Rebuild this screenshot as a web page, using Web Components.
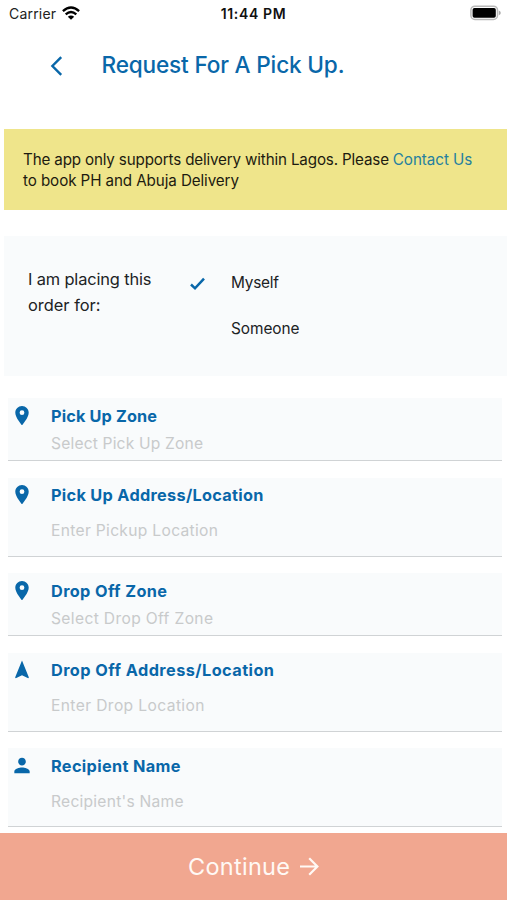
<!DOCTYPE html>
<html lang="en">
<head>
<meta charset="utf-8">
<title>Request For A Pick Up</title>
<style>
html,body{margin:0;padding:0}
body{width:507px;height:900px;overflow:hidden;background:#fff;font-family:Inter,"Liberation Sans",sans-serif}
</style>
</head>
<body>
<pickup-screen></pickup-screen>
<script>
// A single line of text whose tracking is set so that it fills a given width.
class FitText extends HTMLElement {
  connectedCallback() {
    if (this.shadowRoot) return;
    const root = this.attachShadow({mode: 'open'});
    root.innerHTML = `<style>:host{display:inline-block;white-space:nowrap;font-kerning:normal}span{display:inline-block}</style><span><slot></slot></span>`;
    const span = root.querySelector('span');
    const width = parseFloat(this.getAttribute('width'));
    const n = this.textContent.length;
    const natural = span.getBoundingClientRect().width;
    if (width && natural) span.style.letterSpacing = ((width - natural) / (n - 1)).toFixed(3) + 'px';
  }
}

const ICONS = {
  pin: '<path fill-rule="evenodd" d="M12 2C8.13 2 5 5.13 5 9c0 5.25 7 13 7 13s7-7.75 7-13c0-3.87-3.13-7-7-7zm0 9.5a2.5 2.5 0 1 1 0-5 2.5 2.5 0 0 1 0 5z"/>',
  nav: '<path d="M12 2.5 4.8 20.3l.7.7 6.5-3 6.5 3 .7-.7z"/>',
  person: '<path d="M12 12c2.21 0 4-1.79 4-4s-1.79-4-4-4-4 1.79-4 4 1.79 4 4 4zm0 2c-2.67 0-8 1.34-8 4v2h16v-2c0-2.66-5.33-4-8-4z"/>'
};

class StatusBar extends HTMLElement {
  constructor() {
    super();
    this.attachShadow({mode: 'open'}).innerHTML = `<style>
      :host{display:grid;grid-template-columns:1fr auto 1fr;height:28px;line-height:28px;font-size:14px;color:#222}
      .l{display:flex;align-items:center;gap:6px;padding-left:9px}
      .t{font-weight:600;color:#111}
      .r{display:flex;justify-content:flex-end;align-items:center;padding-right:6px}
      svg{display:block}
    </style>
    <div class="l"><fit-text width="47">Carrier</fit-text>
      <svg width="18" height="14" viewBox="0 0 18 14" style="margin-top:-2px"><g fill="none" stroke="#000" stroke-width="2.4"><path d="M.9 5.1Q9-2 17.1 5.1"/><path d="M3.7 8.3Q9 3.8 14.3 8.3"/></g><path d="M9 13.8 5.8 10.7Q9 8.1 12.2 10.7z"/></svg>
    </div>
    <div class="t"><fit-text width="65">11:44 PM</fit-text></div>
    <div class="r"><svg width="31" height="16" viewBox="0 0 31 16" style="margin-top:-2px"><rect x=".9" y="1.2" width="26.6" height="13.3" rx="4" fill="#fff" stroke="#b9b9b9" stroke-width="1.5"/><rect x="2.6" y="3" width="23.2" height="9.7" rx="1.8"/><path d="M28.8 5.5q2 .9 2 2.4t-2 2.4z" fill="#aaa"/></svg></div>`;
  }
}

class TitleBar extends HTMLElement {
  constructor() {
    super();
    this.attachShadow({mode: 'open'}).innerHTML = `<style>
      :host{display:flex;height:74px;box-sizing:border-box;padding:0 0 2px 50px;align-items:center;color:#0967a9;font-size:22.6px;font-weight:500}
      svg{margin:3px 38.5px 0 0}
    </style>
    <svg width="13" height="20" viewBox="0 0 13 20" fill="none" stroke="currentColor" stroke-width="2.4"><path d="M11.2 1.2 2.4 10l8.8 8.8"/></svg><slot></slot>`;
  }
}

class NoticeBanner extends HTMLElement {
  constructor() {
    super();
    this.attachShadow({mode: 'open'}).innerHTML = `<style>
      :host{display:block;height:80.5px;box-sizing:border-box;margin:27.3px 0 0 3.5px;padding:19.5px 0 0 19.5px;background:#efe58b;font-size:15.2px;line-height:21px;color:#1d1b10}
      div{display:flex}
      a{color:#25809f;margin-left:4px}
    </style>
    <div><fit-text width="366">The app only supports delivery within Lagos. Please</fit-text><a><fit-text width="79.5">Contact Us</fit-text></a></div>
    <div><fit-text width="216">to book PH and Abuja Delivery</fit-text></div>`;
  }
}

class OrderFor extends HTMLElement {
  constructor() {
    super();
    this.attachShadow({mode: 'open'}).innerHTML = `<style>
      :host{display:grid;grid-template-columns:162px 41px 1fr;height:139.5px;box-sizing:border-box;margin:26.7px 0 0 4px;padding:30px 0 0 24px;background:#f9fbfc;color:#202224}
      .q{font-size:16.4px;line-height:26px}
      .q fit-text{display:block}
      .o{font-size:15.4px;line-height:22px;display:flex;flex-direction:column;gap:24px;padding-top:6px}
      svg{margin-top:11px}
    </style>
    <div class="q"><fit-text width="123.5">I am placing this</fit-text><fit-text width="72.5">order for:</fit-text></div>
    <svg width="15" height="14" viewBox="0 0 15 14" fill="none" stroke="#0967a9" stroke-width="2.5"><path d="M1 7.5 5 11.3 14 1.6"/></svg>
    <div class="o"><fit-text width="48">Myself</fit-text><fit-text width="68.5">Someone</fit-text></div>`;
  }
}

class FormField extends HTMLElement {
  connectedCallback() {
    if (this.shadowRoot) return;
    const a = k => this.getAttribute(k);
    this.attachShadow({mode: 'open'}).innerHTML = `<style>
      :host{display:grid;grid-template-columns:43px 1fr;height:79px;box-sizing:border-box;border-bottom:1.5px solid #d0d3d5;background:#f9fbfc;padding-top:6.5px;line-height:22px}
      :host([compact]){height:63px}
      svg{display:block;margin:-1px 0 0 1.5px;fill:#0967a9}
      .b{display:flex;flex-direction:column;gap:14px}
      :host([compact]) .b{gap:6px}
      .n{font-size:16.3px;font-weight:650;color:#0967a9}
      .p{font-size:15.6px;color:#c8cacb}
    </style>
    <svg width="24" height="23" viewBox="0 0 24 24">${ICONS[a('icon')]}</svg>
    <div class="b"><fit-text class="n" width="${a('lw')}">${a('label')}</fit-text><fit-text class="p" width="${a('pw')}">${a('hint')}</fit-text></div>`;
  }
}

class ContinueButton extends HTMLElement {
  constructor() {
    super();
    this.attachShadow({mode: 'open'}).innerHTML = `<style>
      :host{display:flex;align-items:center;height:67px;box-sizing:border-box;background:#f1a790;color:#fff9f5;font-size:23.5px;font-weight:400;padding-left:188px;gap:10px}
    </style>
    <fit-text width="102">Continue</fit-text>
    <svg width="19" height="19" viewBox="0 0 19 19" fill="none" stroke="currentColor" stroke-width="2.2"><path d="M0 9.5h17M9.2 1.2l8.2 8.3-8.2 8.3"/></svg>`;
  }
}

class PickupScreen extends HTMLElement {
  constructor() {
    super();
    this.attachShadow({mode: 'open'}).innerHTML = `<style>
      :host{display:flex;flex-direction:column;width:507px;height:900px;background:#fff}
      .f{display:flex;flex-direction:column;gap:16.4px;margin:22.5px 5px 0 8px}
      continue-button{margin-top:auto}
    </style>
    <status-bar></status-bar>
    <title-bar><fit-text width="243">Request For A Pick Up.</fit-text></title-bar>
    <notice-banner></notice-banner>
    <order-for></order-for>
    <div class="f">
      <form-field compact icon="pin" label="Pick Up Zone" lw="106" hint="Select Pick Up Zone" pw="152"></form-field>
      <form-field icon="pin" label="Pick Up Address/Location" lw="212.5" hint="Enter Pickup Location" pw="167"></form-field>
      <form-field compact icon="pin" label="Drop Off Zone" lw="116" hint="Select Drop Off Zone" pw="162"></form-field>
      <form-field icon="nav" label="Drop Off Address/Location" lw="223" hint="Enter Drop Location" pw="153.5"></form-field>
      <form-field icon="person" label="Recipient Name" lw="129.5" hint="Recipient's Name" pw="132.5"></form-field>
    </div>
    <continue-button></continue-button>`;
  }
}

customElements.define('fit-text', FitText);
customElements.define('status-bar', StatusBar);
customElements.define('title-bar', TitleBar);
customElements.define('notice-banner', NoticeBanner);
customElements.define('order-for', OrderFor);
customElements.define('form-field', FormField);
customElements.define('continue-button', ContinueButton);
customElements.define('pickup-screen', PickupScreen);
</script>
</body>
</html>
